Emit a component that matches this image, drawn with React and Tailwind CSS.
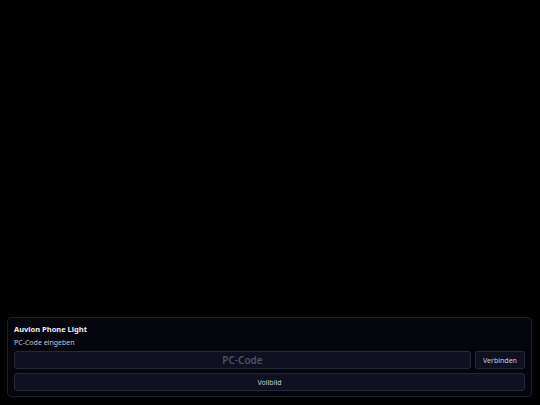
import { useState } from 'react';

export default function App() {
  const [code, setCode] = useState('');

  return (
    <div
      className="h-[405px] w-full bg-black flex flex-col justify-end pl-[7px] pr-[8px] pb-[8px]"
      style={{ fontFamily: '"Noto Sans", sans-serif' }}
    >
      {/* Verbindungs-Panel */}
      <div className="flex flex-col bg-[#05060d] border border-[#1b1e2b] rounded-[4px] px-[6px] pt-[5px] pb-[5px]">
        <p className="text-[7.5px] font-bold text-[#eceef3] leading-[12px]">Auvion Phone Light</p>
        <p className="text-[7px] text-[#c3c6cf] leading-[10px] mt-[3px]">PC-Code eingeben</p>

        <div className="flex gap-[4px] mt-[3px]">
          <input
            value={code}
            onChange={(e) => setCode(e.target.value)}
            placeholder="PC-Code"
            className="flex-1 min-w-0 h-[18px] bg-[#0f1120] border border-[#252938] rounded-[3px] text-center
              text-[10px] font-semibold text-[#d0d3db] placeholder-[#4d5262] focus:outline-none"
          />
          <button className="block w-[50px] h-[18px] bg-[#0f1120] border border-[#252938] rounded-[3px] text-[7px] leading-none text-[#c8cbd4]">
            Verbinden
          </button>
        </div>

        <button className="block w-full h-[18px] mt-[4px] bg-[#0f1120] border border-[#252938] rounded-[3px] text-[7px] leading-none text-[#c8cbd4]">
          Vollbild
        </button>
      </div>
    </div>
  );
}
